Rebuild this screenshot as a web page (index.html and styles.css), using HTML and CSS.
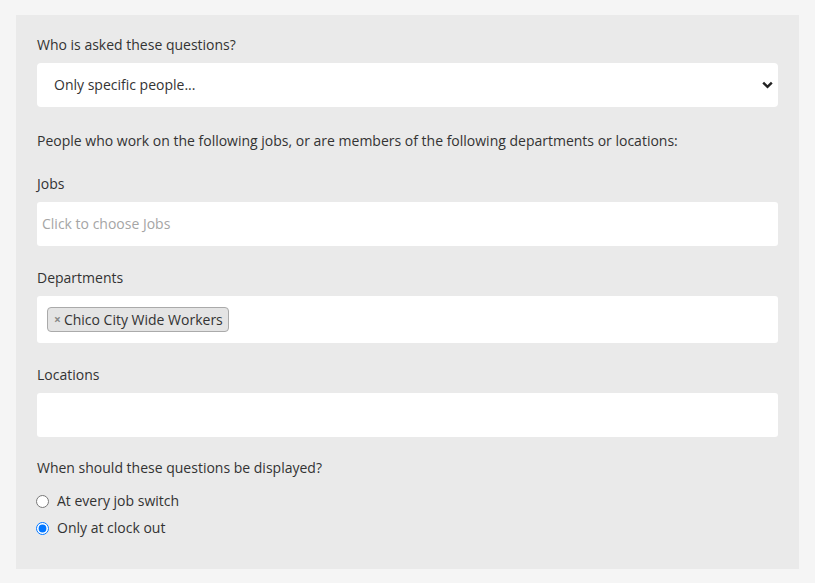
FILE: index.html
```html
<!DOCTYPE html>
<html>
<head>
<meta charset="utf-8">
<link rel="stylesheet" href="styles.css">
</head>
<body>
<div class="panel">
  <label class="label first">Who is asked these questions?</label>
  <div class="select">
    <span>Only specific people...</span>
    <svg class="chev" width="11" height="8" viewBox="0 0 11 8"><path d="M1.2 1.6 L5.5 5.9 L9.8 1.6" fill="none" stroke="#222" stroke-width="2.4"/></svg>
  </div>
  <p class="info">People who work on the following jobs, or are members of the following departments or locations:</p>
  <label class="label">Jobs</label>
  <div class="input"><span class="placeholder">Click to choose Jobs</span></div>
  <label class="label l-dept">Departments</label>
  <div class="input tags"><span class="tag"><span class="x">×</span>Chico City Wide Workers</span></div>
  <label class="label l-loc">Locations</label>
  <div class="input"></div>
  <label class="label when">When should these questions be displayed?</label>
  <div class="radios">
    <label class="radio"><input type="radio" name="w"> At every job switch</label>
    <label class="radio"><input type="radio" name="w" checked> Only at clock out</label>
  </div>
</div>
</body>
</html>
```
FILE: styles.css
```css
html, body { margin: 0; padding: 0; }
body {
  background: #f5f5f5;
  font-family: "Open Sans", "Liberation Sans", sans-serif;
  font-size: 14px;
  line-height: 20px;
  color: #333;
  padding: 15px 16px 15px 16px;
}
.panel {
  background: #eaeaea;
  padding: 20px 21px 31px 21px;
  display: flex;
  flex-direction: column;
  width: 741px;
}
.label { display: block; margin-top: 23px; }
.label.first { margin-top: 0; }
.label.l-dept { margin-top: 22px; }
.label.l-loc { margin-top: 22px; }
.label.when { margin-top: 21px; }
.select {
  margin-top: 8px;
  height: 44px;
  background: #fff;
  border-radius: 4px;
  display: flex;
  align-items: center;
  justify-content: space-between;
  padding: 0 5px 0 17px;
}
.info { margin: 24px 0 0 0; }
.input {
  margin-top: 8px;
  height: 44px;
  background: #fff;
  border-radius: 3px;
  display: flex;
  align-items: center;
  padding: 0 5px;
}
.input.tags { height: 47px; padding: 0 10px; }
.placeholder { color: #a5a5a5; }
.tag {
  display: inline-flex;
  align-items: center;
  height: 23px;
  padding: 0 5px 0 6px;
  background: #e4e4e4;
  border: 1px solid #aaa;
  border-radius: 4px;
}
.tag .x { color: #888; font-size: 12px; font-weight: bold; margin-right: 3px; }
.radios { margin-top: 13px; display: flex; flex-direction: column; gap: 7px; }
.radio { display: flex; align-items: center; }
.radio input { margin: 0 7px 0 0; width: 13px; height: 13px; position: relative; left: -1px; }
```
